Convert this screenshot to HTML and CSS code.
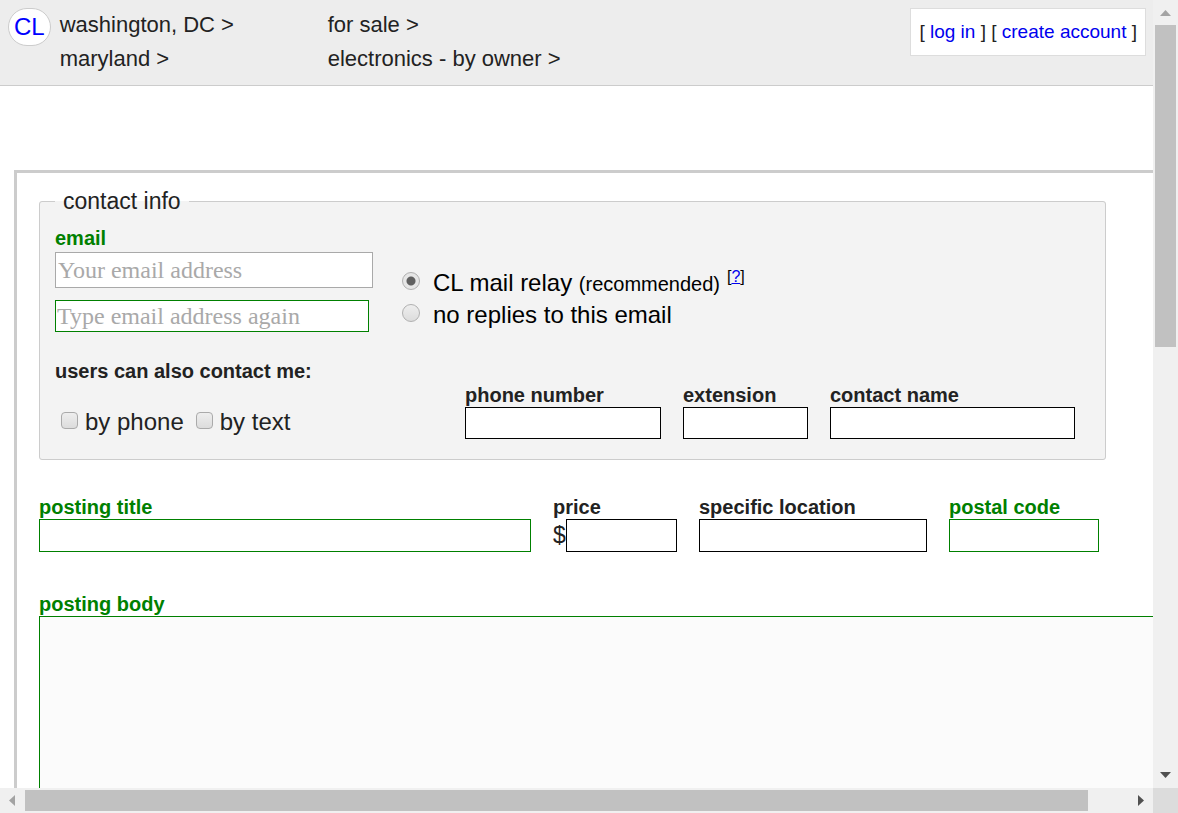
FILE: index.html
```html
<!DOCTYPE html>
<html lang="en">
<head>
<meta charset="utf-8">
<title>create posting</title>
<link rel="stylesheet" href="styles.css">
</head>
<body>
<div class="window">
  <div class="page">
    <header class="topbar">
      <a class="logo" href="#">CL</a>
      <nav class="crumbs">
        <a href="#">washington, DC &gt;</a>
        <a href="#">for sale &gt;</a>
        <a href="#">maryland &gt;</a>
        <a href="#">electronics - by owner &gt;</a>
      </nav>
      <div class="account">[ <a href="#">log in</a> ] [ <a href="#">create account</a> ]</div>
    </header>
    <form class="posting">
      <fieldset class="contact">
        <legend>contact info</legend>
        <div class="contact-row">
          <div class="emails">
            <label class="label required" for="email">email</label>
            <input class="email" id="email" type="email" placeholder="Your email address">
            <input class="email confirm" type="email" aria-label="Type email address again" placeholder="Type email address again">
          </div>
          <div class="replies">
            <div class="choice">
              <input id="relay" type="radio" name="reply" checked>
              <label for="relay">CL mail relay <small>(recommended)</small></label>
              <span class="help">[<a href="#">?</a>]</span>
            </div>
            <div class="choice">
              <input id="none" type="radio" name="reply">
              <label for="none">no replies to this email</label>
            </div>
          </div>
        </div>
        <div class="phone-row">
          <div class="also">
            <span class="label">users can also contact me:</span>
            <div class="ways">
              <input id="byphone" type="checkbox"><label for="byphone">by phone</label>
              <input id="bytext" type="checkbox"><label for="bytext">by text</label>
            </div>
          </div>
          <div class="phone-fields">
            <div class="field"><label class="label" for="phone">phone number</label><input id="phone" type="text"></div>
            <div class="field"><label class="label" for="ext">extension</label><input id="ext" type="text"></div>
            <div class="field"><label class="label" for="name">contact name</label><input id="name" type="text"></div>
          </div>
        </div>
      </fieldset>
      <div class="title-row">
        <div class="field required"><label class="label" for="title">posting title</label><input id="title" type="text"></div>
        <div class="field"><label class="label" for="price">price</label><div class="money"><span>$</span><input id="price" type="text"></div></div>
        <div class="field"><label class="label" for="location">specific location</label><input id="location" type="text"></div>
        <div class="field required"><label class="label" for="postal">postal code</label><input id="postal" type="text"></div>
      </div>
      <div class="body-row">
        <label class="label required" for="body">posting body</label>
        <textarea id="body"></textarea>
      </div>
    </form>
  </div>
  <div class="scroll vertical">
    <svg class="arrow dim" viewBox="0 0 25 25"><path d="M7 16L12.500 10L18 16Z"/></svg>
    <div class="track"><div class="thumb"></div></div>
    <svg class="arrow" viewBox="0 0 25 25"><path d="M7 9L12.500 15L18 9Z"/></svg>
  </div>
  <div class="scroll horizontal">
    <svg class="arrow dim" viewBox="0 0 25 25"><path d="M15 7L9 12.500L15 18Z"/></svg>
    <div class="track"><div class="thumb"></div></div>
    <svg class="arrow" viewBox="0 0 25 25"><path d="M10 7L16 12.500L10 18Z"/></svg>
  </div>
  <div class="corner"></div>
</div>
</body>
</html>
```
FILE: styles.css
```css
* { box-sizing: border-box; }
body {
  margin: 0;
  background: #fff;
  color: #222;
  font-family: "Liberation Sans", Arial, sans-serif;
  font-size: 23px;
}
a { color: #00e; text-decoration: none; }
.window {
  display: grid;
  grid-template-columns: minmax(0, 1fr) 25px;
  grid-template-rows: minmax(0, 1fr) 25px;
  height: 100vh;
}
.page { display: flex; flex-direction: column; overflow: hidden; }

.topbar {
  display: flex;
  align-items: flex-start;
  gap: 9px;
  padding: 8px 7px 9px 8px;
  background: #ededed;
  border-bottom: 1px solid #ccc;
}
.logo {
  padding: 0 5px;
  border: 1px solid #ccc;
  border-radius: 20px;
  background: #fff;
  font-size: 24px;
  line-height: 36px;
  color: #00f;
}
.crumbs {
  display: grid;
  grid-template-columns: 268px auto;
  flex: 1;
  font-size: 22px;
  line-height: 34px;
}
.crumbs a { color: #222; }
.account {
  padding: 0 8px;
  border: 1px solid #ddd;
  background: #fff;
  font-size: 19px;
  line-height: 46px;
}

.posting {
  display: flex;
  flex-direction: column;
  flex: 1;
  min-height: 0;
  margin: 84px 0 0 14px;
  padding: 15px 0 0 22px;
  border: solid #ccc;
  border-width: 3px 0 0 3px;
}
.contact {
  margin: 0 47px 0 0;
  padding: 12px 30px 20px 15px;
  border: 1px solid #ccc;
  border-radius: 3px;
  background: #f3f3f3;
}
.contact legend { padding: 0 8px; line-height: 26px; }
.label { display: block; font-size: 20px; font-weight: bold; line-height: 24px; }
.required { color: green; }

input[type="text"], .email, textarea {
  display: block;
  width: 100%;
  margin: 0;
  border: 1px solid #000;
  border-radius: 0;
  background: #fff;
}
input[type="text"] { height: 32px; }
.required input[type="text"] { border-color: green; }
.email {
  height: 36px;
  margin-top: 2px;
  padding: 0 2px;
  border-color: #a9a9a9;
  font-family: "Liberation Serif", "Times New Roman", serif;
  font-size: 24px;
}
.confirm { width: 314px; height: 32px; margin-top: 12px; padding: 0 1px; border-color: green; }
.email::placeholder { color: #a9a9a9; }

.contact-row { display: grid; grid-template-columns: 318px 1fr; gap: 29px; align-items: end; }
.replies { padding-bottom: 1px; }
.choice { display: flex; align-items: center; height: 32px; color: #000; font-size: 24px; }
.choice small { font-size: 20px; }
.choice input, .ways input {
  appearance: none;
  flex: none;
  width: 18px;
  height: 18px;
  margin: 0 13px 5px 0;
  border: 1px solid #b0b0b0;
  border-radius: 50%;
  background: linear-gradient(#eee, #dcdcdc);
}
.choice input:checked { background: radial-gradient(circle, #606060 4px, #e6e6e6 5px); }
.help { align-self: flex-start; margin-left: 7px; font-size: 16px; line-height: 20px; }
.help a { text-decoration: underline; }

.phone-row {
  display: grid;
  grid-template-columns: 380px minmax(0, 1fr);
  gap: 30px;
  align-items: end;
  margin-top: 27px;
}
.also { display: grid; gap: 23px; padding-bottom: 1px; }
.ways { display: flex; align-items: center; height: 32px; padding-left: 6px; font-size: 24px; }
.ways input { width: 17px; height: 17px; margin: 0 7px 4px 0; border-radius: 4px; border-color: #aaa; }
.ways label { margin-right: 12px; }
.phone-fields { display: grid; grid-template-columns: 196fr 125fr 245fr; gap: 22px; }
.title-row {
  display: grid;
  grid-template-columns: 492fr 124fr 228fr 150fr;
  gap: 22px;
  margin: 35px 54px 0 0;
}
.title-row input[type="text"] { height: 33px; }
.money { display: flex; align-items: center; }
.money input { flex: 1; min-width: 0; }

.body-row { display: flex; flex-direction: column; flex: 1; min-height: 0; margin-top: 40px; }
textarea {
  flex: 1;
  border-color: green;
  border-width: 1px 0 0 1px;
  background: #fbfbfb;
  resize: none;
}

.scroll { display: flex; background: #f0f0f0; }
.vertical { flex-direction: column; padding: 0 2px; }
.horizontal { grid-row: 2; padding: 2px 0; }
.arrow { flex: none; width: 25px; height: 25px; fill: #505050; }
.vertical .arrow { margin-left: -2px; }
.horizontal .arrow { margin-top: -2px; }
.arrow.dim { fill: #a3a3a3; }
.track { flex: 1; }
.thumb { background: #c1c1c1; }
.vertical .thumb { height: 43.6%; }
.horizontal .thumb { width: 96.4%; height: 100%; }
.corner { grid-row: 2; grid-column: 2; background: #dcdcdc; }
```
